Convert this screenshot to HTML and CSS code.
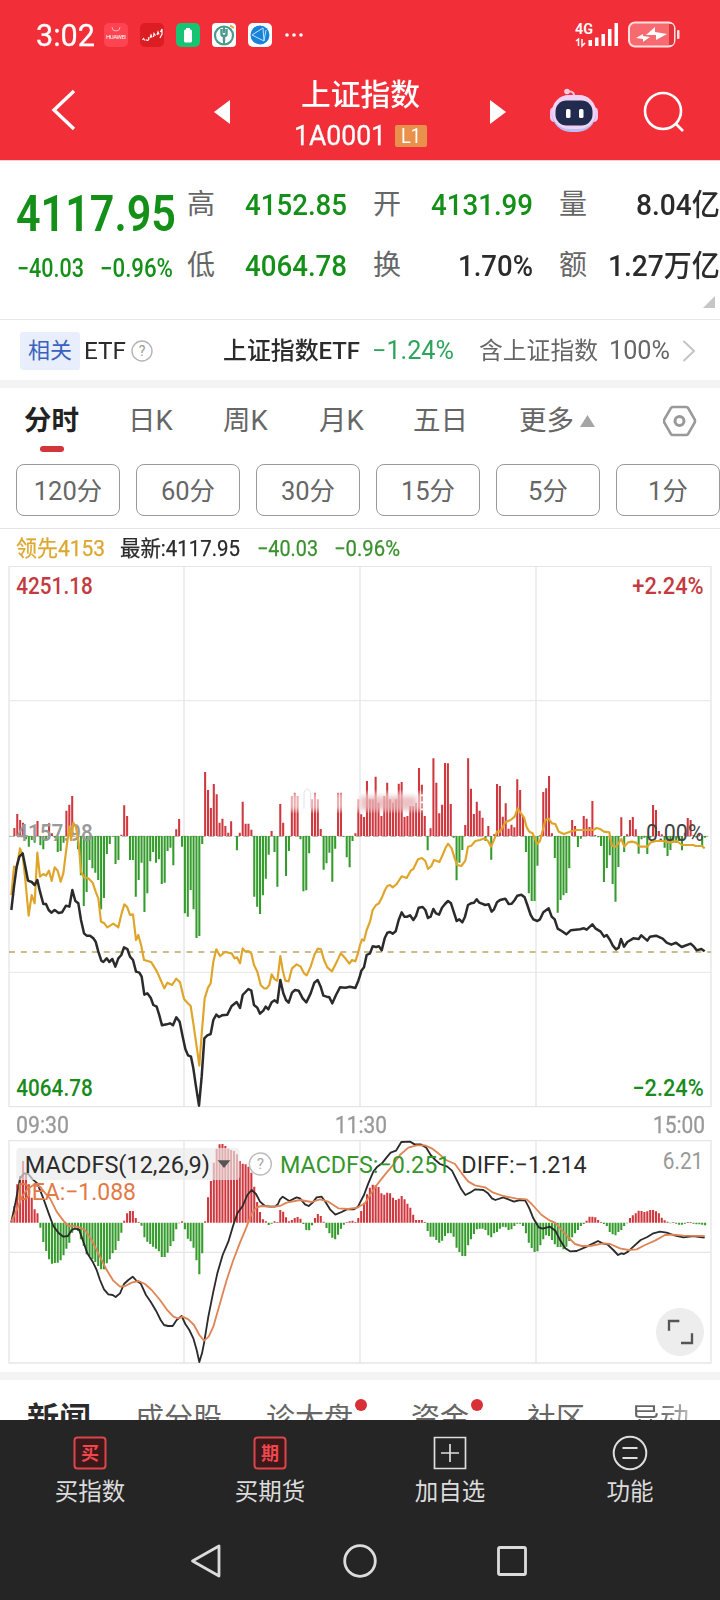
FILE: index.html
```html
<!DOCTYPE html>
<html lang="zh-CN">
<head>
<meta charset="utf-8">
<title>上证指数</title>
<link rel="stylesheet" href="styles.css">
</head>
<body>
<div class="phone">
  <div class="status">
    <span class="clock fit" data-w="59">3:02</span>
    <div class="apps">
      <svg width="24" height="24" viewBox="0 0 24 24"><rect width="24" height="24" rx="5" fill="#ff4350"/><path d="M8 4a4 4 0 0 0 8 0" fill="none" stroke="#ffb1b3" stroke-width="1"/><text x="2" y="16" font-size="6" fill="#fff" textLength="20">HUAWEI</text></svg>
      <svg width="24" height="24" viewBox="0 0 24 24"><rect width="24" height="24" rx="5" fill="#dc1d22"/><path d="M2.500 17l1-1.500 1.500 2M6 16.500a1.500 1.500 0 1 0 2-2M10 15l1-3 1 2.500M13.500 14l.5-3.500 1.500 2M17 12l1-3 1 2.500M20 15l2-4V6l-1.500 3" fill="none" stroke="#fff" stroke-width="1.200"/></svg>
      <svg width="24" height="24" viewBox="0 0 24 24"><rect width="24" height="24" rx="5" fill="#16c473"/><rect x="8" y="6.500" width="8" height="13" rx="1.500" fill="#fff"/><rect x="10" y="5" width="4" height="3" fill="#fff"/></svg>
      <svg width="24" height="24" viewBox="0 0 24 24"><rect width="24" height="24" rx="4" fill="#fff"/><circle cx="12" cy="12.500" r="9" fill="none" stroke="#4a9b8d" stroke-width="2.200"/><path d="M12 3v7M12 14v7" fill="none" stroke="#4a9b8d" stroke-width="2"/><path d="M9.500 6v5q0 2 2.500 2t2.500-2V6M12 12v6" fill="none" stroke="#4a9b8d" stroke-width="2.500"/><path d="M18 2.500l4 2.500" stroke="#e8a13c" stroke-width="2"/></svg>
      <svg width="24" height="24" viewBox="0 0 24 24"><rect width="24" height="24" rx="5" fill="#fff"/><circle cx="12" cy="12" r="9.500" fill="#1883d8"/><path d="M4 12l11-7 1 13L4 12m12 6l2-11" fill="none" stroke="#bfe4ff" stroke-width="1"/></svg>
      <svg class="dots" width="20" height="24" viewBox="0 0 20 24" fill="#fff"><circle cx="3" cy="12" r="1.800"/><circle cx="10" cy="12" r="1.800"/><circle cx="17" cy="12" r="1.800"/></svg>
    </div>
    <svg class="signal" width="108" height="28" viewBox="0 0 108 28">
      <g fill="#fff"><text x="0" y="13" font-size="15" font-weight="600" textLength="18" lengthAdjust="spacingAndGlyphs">4G</text>
      <path d="M13.500 19h3.500v6h-3.500zM20 16.500h3.500V25H20zM26.500 13H30v12h-3.500zM33 8h3.500v17H33zM39.500 2H43v23h-3.500z"/>
      <path d="M1 20l2.500-2v7M7 18v7l3-3" fill="none" stroke="#fff" stroke-width="1.500"/></g>
      <rect x="54" y="1.500" width="45.500" height="24" rx="6" fill="#f66a70" stroke="#ffdfe0" stroke-width="2"/>
      <path d="M94 3v21h2q3 0 3-4V7q0-4-3-4z" fill="#e0323b"/>
      <rect x="102" y="9" width="2.500" height="9" rx="1" fill="#ffe3e3"/>
      <path d="M71 14l9-8v5l12 2-11 6v-5zM61 17l7-4v2l7 1-7 5v-3z" fill="#fff"/>
    </svg>
  </div>
  <header class="header">
    <svg class="back" width="30" height="46" viewBox="0 0 30 46"><path d="M25 4L5 23l20 19" fill="none" stroke="#fff" stroke-width="3.400"/></svg>
    <svg class="prev" width="16" height="24" viewBox="0 0 16 24"><path d="M16 0v24L0 12z" fill="#fff"/></svg>
    <div class="title">
      <div class="name"><span class="fit" data-w="119">上证指数</span></div>
      <div class="code"><span class="fit" data-w="92">1A0001</span><b class="level"><span class="fit" data-w="20">L1</span></b></div>
    </div>
    <svg class="next" width="16" height="24" viewBox="0 0 16 24"><path d="M0 0v24l16-12z" fill="#fff"/></svg>
    <svg class="robot" width="50" height="46" viewBox="0 0 50 46">
      <path d="M18 4.500q8-1 7 6" fill="none" stroke="#f7bfd8" stroke-width="2"/><circle cx="18" cy="4.500" r="2.800" fill="#f9c9df"/>
      <rect x="1" y="20" width="9" height="15" rx="4.500" fill="#f3c6ee"/><rect x="40" y="20" width="9" height="15" rx="4.500" fill="#f3c6ee"/>
      <rect x="3" y="8" width="44" height="37" rx="18.500" fill="#b8bef6"/><rect x="3" y="8" width="44" height="34" rx="17" fill="#efd2f4"/>
      <rect x="6.500" y="13.500" width="37" height="25" rx="11" fill="#202b4e"/><rect x="17" y="22" width="4.500" height="9" rx="1.500" fill="#fff"/><rect x="30" y="22" width="4.500" height="9" rx="1.500" fill="#fff"/>
    </svg>
    <svg class="search" width="44" height="44" viewBox="0 0 44 44" fill="none" stroke="#fff" stroke-width="2.600"><circle cx="21" cy="21" r="18"/><path d="M33.500 33.500L41 41"/></svg>
  </header>

  <section class="quote">
    <div class="last">
      <div class="price"><span class="fit" data-w="160">4117.95</span></div>
      <div class="change"><span class="fit" data-w="67">−40.03</span><span class="fit" data-w="73">−0.96%</span></div>
    </div>
    <div class="stats">
      <label>高</label><span class="val green"><span class="fit" data-w="102">4152.85</span></span>
      <label>开</label><span class="val green"><span class="fit" data-w="102">4131.99</span></span>
      <label>量</label><span class="val"><span class="fit" data-w="84">8.04亿</span></span>
      <label>低</label><span class="val green"><span class="fit" data-w="102">4064.78</span></span>
      <label>换</label><span class="val"><span class="fit" data-w="75">1.70%</span></span>
      <label>额</label><span class="val"><span class="fit" data-w="112">1.27万亿</span></span>
    </div>
    <svg class="corner" width="12" height="12" viewBox="0 0 12 12"><path d="M12 0v12H0z" fill="#c6c6c6"/></svg>
  </section>

  <section class="etf">
    <span class="badge">相关</span><span class="etf-name"><span class="fit" data-w="42">ETF</span></span>
    <svg class="help" width="22" height="22" viewBox="0 0 22 22"><circle cx="11" cy="11" r="10" fill="none" stroke="#b4b4b4" stroke-width="1.400"/><text x="11" y="16" font-size="14" text-anchor="middle" fill="#999">?</text></svg>
    <span class="etf-fund"><span class="fit" data-w="137">上证指数ETF</span></span>
    <span class="etf-pct"><span class="fit" data-w="82">−1.24%</span></span>
    <span class="etf-inc"><span class="fit" data-w="119">含上证指数</span></span>
    <span class="etf-inc full"><span class="fit" data-w="61">100%</span></span>
    <svg class="more" width="14" height="22" viewBox="0 0 14 22"><path d="M1.500 1L12 11 1.500 21" fill="none" stroke="#c4c4c4" stroke-width="2"/></svg>
  </section>

  <nav class="periods">
    <span class="on">分时</span><span>日K</span><span>周K</span><span>月K</span><span>五日</span><span>更多</span>
    <svg class="caret" width="15" height="12" viewBox="0 0 15 12"><path d="M7.500 0L15 12H0z" fill="#a5a5a5"/></svg>
    <svg class="gear" width="34" height="32" viewBox="0 0 34 32" fill="none" stroke="#999"><path d="M10 2h13q1.500 0 2.300 1.300L31.500 14q1 2 0 4L25.300 28.700Q24.500 30 23 30H10q-1.500 0-2.300-1.300L1.500 18q-1-2 0-4L7.700 3.300Q8.500 2 10 2z" stroke-width="2.600"/><circle cx="16.500" cy="16" r="4.500" stroke-width="3"/></svg>
  </nav>
  <div class="minutes"><span>120分</span><span>60分</span><span>30分</span><span>15分</span><span>5分</span><span>1分</span></div>

  <div class="legend">
    <span class="lead"><span class="fit" data-w="89">领先4153</span></span>
    <span class="now"><span class="fit" data-w="120">最新:4117.95</span></span>
    <span class="chg"><span class="fit" data-w="61">−40.03</span></span>
    <span class="chg"><span class="fit" data-w="66">−0.96%</span></span>
  </div>

  <svg class="chart" width="720" height="542" viewBox="0 -522 2160 1626">
    <defs><filter id="soft"><feGaussianBlur stdDeviation="8"/></filter></defs>
    <g fill="none" stroke="#e6e6e6" stroke-width="4">
      <path d="M27-521H2133V1100H27zM552-521V1100M1080-521V1100M1608-521V1100"/>
      <path d="M27-118H2133M27 697H2133" stroke-width="3"/>
    </g>
    <path d="M27 289H2133" stroke="#aaa" stroke-width="3" stroke-dasharray="18 8"/>
    <g id="price-bars"></g>
    <g filter="url(#soft)">
      <rect x="860" y="158" width="410" height="54" fill="#fff" opacity=".6"/>
      <rect x="1080" y="168" width="170" height="42" fill="#d9868b" opacity=".5"/>
    </g>
    <path d="M912 205v-40q0-18 10-18t10 18v40" fill="none" stroke="#e2e2e2" stroke-width="3"/>
    <path d="M1262 166h20v42h-20M1262 187h20" fill="none" stroke="#fff" stroke-width="5"/>
    <path d="M27 636H2133" stroke="#b9a866" stroke-width="4" stroke-dasharray="18 17.500"/>
    <g font-size="69" font-weight="500">
      <text x="49" y="303" fill="#999" textLength="229" lengthAdjust="spacingAndGlyphs">4157.98</text>
      <text x="1938" y="304" fill="#444" font-weight="400" textLength="173" lengthAdjust="spacingAndGlyphs">0.00%</text>
    </g>
    <g id="price-lines"></g>
    <g font-size="69" font-weight="500">
      <text x="49" y="-437" fill="#c43a40" textLength="229" lengthAdjust="spacingAndGlyphs">4251.18</text>
      <text x="1897" y="-437" fill="#c43a40" textLength="214" lengthAdjust="spacingAndGlyphs">+2.24%</text>
      <text x="49" y="1068" fill="#198a1c" textLength="229" lengthAdjust="spacingAndGlyphs">4064.78</text>
      <text x="1897" y="1068" fill="#198a1c" textLength="214" lengthAdjust="spacingAndGlyphs">−2.24%</text>
    </g>
  </svg>

  <div class="times"><span class="fit" data-w="53">09:30</span><span class="fit" data-w="52">11:30</span><span class="fit" data-w="52">15:00</span></div>

  <div class="macd">
    <svg width="720" height="226" viewBox="0 117 2160 678">
      <path d="M27 122H2133V789H27zM552 122V789M1080 122V789M1608 122V789M27 457H2133" fill="none" stroke="#e6e6e6" stroke-width="4"/>
      <g id="macd-bars"></g>
      <g id="macd-lines"></g>
      <rect x="49" y="144" width="670" height="96" rx="12" fill="#e9e9e9" opacity=".66"/>
      <path d="M653 181h38l-19 23z" fill="#555"/>
      <circle cx="781" cy="192" r="33" fill="#fff" fill-opacity=".75" stroke="#bbb" stroke-width="4"/>
      <text x="781" y="208" font-size="46" text-anchor="middle" fill="#aaa">?</text>
      <g font-size="72">
        <text x="74" y="219" fill="#2b2b2b" textLength="556" lengthAdjust="spacingAndGlyphs">MACDFS(12,26,9)</text>
        <text x="840" y="219" fill="#35962b" textLength="511" lengthAdjust="spacingAndGlyphs">MACDFS:−0.251</text>
        <text x="1384" y="219" fill="#2b2b2b" textLength="376" lengthAdjust="spacingAndGlyphs">DIFF:−1.214</text>
        <text x="50" y="300" fill="#e27946" textLength="358" lengthAdjust="spacingAndGlyphs">DEA:−1.088</text>
        <text x="1988" y="208" fill="#999" textLength="122" lengthAdjust="spacingAndGlyphs">6.21</text>
      </g>
      <circle cx="2040" cy="696" r="72" fill="#ededed"/>
      <path d="M2007 692V663h31M2076 700v29h-33" fill="none" stroke="#555" stroke-width="7"/>
    </svg>
  </div>

  <nav class="feeds">
    <span class="on">新闻</span><span>成分股</span><span class="dot">诊大盘</span><span class="dot">资金</span><span>社区</span><span class="fade">异动</span>
  </nav>

  <footer class="actions">
    <div><svg width="34" height="34" viewBox="0 0 34 34"><rect x="1.500" y="1.500" width="31" height="31" rx="3" fill="#3a191b" stroke="#d9474b" stroke-width="2"/><text x="17" y="23.500" font-size="18" font-weight="700" text-anchor="middle" fill="#f0474d">买</text></svg><span>买指数</span></div>
    <div><svg width="34" height="34" viewBox="0 0 34 34"><rect x="1.500" y="1.500" width="31" height="31" rx="3" fill="#3a191b" stroke="#d9474b" stroke-width="2"/><text x="17" y="23.500" font-size="18" font-weight="700" text-anchor="middle" fill="#f0474d">期</text></svg><span>买期货</span></div>
    <div><svg width="34" height="34" viewBox="0 0 34 34" fill="none" stroke="#dedede" stroke-width="1.700"><path d="M1.500 1.500h31v31h-31zM8 17h18M17 8v18"/></svg><span>加自选</span></div>
    <div><svg width="36" height="36" viewBox="0 0 36 36" fill="none" stroke="#dedede" stroke-width="2"><circle cx="18" cy="18" r="16.300"/><path d="M10.500 13h15M10.500 23h15"/></svg><span>功能</span></div>
  </footer>
  <div class="system">
    <svg width="32" height="36" viewBox="0 0 32 36"><path d="M29 3v30L2.500 18z" fill="none" stroke="#dcdcdc" stroke-width="2.800" stroke-linejoin="round"/></svg>
    <svg width="36" height="36" viewBox="0 0 36 36"><circle cx="18" cy="18" r="15.300" fill="none" stroke="#dcdcdc" stroke-width="2.800"/></svg>
    <svg width="32" height="32" viewBox="0 0 32 32"><rect x="2.500" y="2.500" width="27" height="27" rx="1.500" fill="none" stroke="#dcdcdc" stroke-width="2.800"/></svg>
  </div>
</div>
<script src="chart.js"></script>
</body>
</html>
```
FILE: styles.css
```css
* { box-sizing: border-box; }
body { margin: 0; background: #fff; color: #2b2b2b; font-family: Roboto, "Noto Sans CJK SC", sans-serif; }
svg { display: block; flex: none; }
.phone { width: 720px; height: 1600px; display: flex; flex-direction: column; overflow: hidden; }
.phone > * { flex: none; }
.fit { display: inline-block; white-space: nowrap; transform-origin: 0 50%; }

.status { height: 66px; padding: 3px 37px 0 36px; background: #f22f38; color: #fff; display: flex; align-items: center; }
.clock { font-size: 32px; line-height: 36px; font-weight: 400; -webkit-text-stroke: 0.3px #fff; }
.apps { display: flex; gap: 12px; margin-left: 9px; }
.dots { margin-left: 0; }
.signal { margin-left: auto; }
.header { height: 94px; background: #f22f38; color: #fff; display: grid; grid-template-columns: 214px 16px 260px 16px 43px 50px 121px; align-items: center; }
.header > * { margin-top: -6px; }
.back { margin-left: 49px; }
.header .prev, .header .next { margin-top: -2px; }
.header .robot { margin-top: -7px; grid-column: 6; }
.header .search { margin: -3px 0 0 43px; }
.header .title { margin-top: 1px; text-align: center; }
.name { height: 41px; line-height: 48px; font-size: 30px; font-weight: 500; }
.code { height: 44px; display: flex; align-items: center; padding: 4px 0 0 64px; font-size: 28px; line-height: 30px; -webkit-text-stroke: 0.3px #fff; }
.level { width: 32px; height: 22px; margin-left: 9px; border-radius: 2px; background: #e9904c; font-size: 20px; line-height: 22px; font-weight: 400; -webkit-text-stroke: 0; }

.quote { height: 160px; border-bottom: 1px solid #e6e6e6; display: flex; position: relative; border-top: 1px solid #ffccd0; }
.last { width: 187px; padding: 22px 0 0 16px; color: #148f18; }
.price { font-size: 50px; line-height: 62px; font-weight: 600; height: 62px; }
.change { display: flex; gap: 16px; font-size: 25px; line-height: 30px; font-weight: 500; margin-top: 9px; padding-left: 1px; }
.stats { display: grid; grid-template-columns: 40px 120px 26px 40px 120px 26px 40px 121px; grid-template-rows: 61px 61px; padding-top: 13px; align-items: center; line-height: 36px; }
.stats label { font-size: 28px; color: #666; }
.stats label:nth-of-type(3n+2) { grid-column: 4; }
.stats label:nth-of-type(3n) { grid-column: 7; }
.val { font-size: 30px; font-weight: 500; text-align: right; white-space: nowrap; }
.green { color: #148f18; }
.corner { position: absolute; right: 5px; bottom: 11px; }

.etf { height: 60px; display: flex; align-items: center; padding-top: 1px; font-size: 24px; line-height: 32px; white-space: nowrap; }
.badge { width: 60px; height: 38px; margin-left: 20px; border-radius: 3px; background: #e8eefb; color: #3b61bf; font-size: 22px; line-height: 38px; text-align: center; }
.etf-name { margin-left: 4px; width: 47px; }
.etf-fund { margin-left: 70px; font-weight: 500; width: 149px; }
.etf-pct { color: #2ea35c; width: 107px; font-size: 25px; }
.etf-inc { color: #666; width: 130px; }
.etf-inc.full { width: 73px; font-size: 25px; }

.periods { height: 84px; border-top: 8px solid #f4f4f4; padding: 0 0 11px 24px; display: grid; grid-template-columns: 104px 95px 96px 94px 106px 61px 83px 34px; align-items: center; font-size: 27.5px; line-height: 38px; color: #666; }
.periods .on { color: #222; font-weight: 700; position: relative; }
.periods .on::after { content: ""; position: absolute; left: 16px; top: 44px; width: 24px; height: 6px; border-radius: 3px; background: #d2363b; }
.minutes { height: 65px; border-bottom: 1px solid #e4e4e4; display: flex; gap: 16px; padding-left: 16px; }
.minutes span { flex: none; width: 104px; height: 52px; border: 1px solid #999; border-radius: 8px; text-align: center; font-size: 25.5px; line-height: 52px; color: #666; }
.legend { height: 37px; padding: 2px 0 0 16px; display: flex; align-items: center; font-size: 21.5px; line-height: 28px; }
.legend > span { white-space: nowrap; }
.lead { width: 104px; color: #dca72f; }
.now { width: 137px; }
.chg { width: 77px; color: #3a912e; }
.legend > span { -webkit-text-stroke: 0.25px currentColor; }
.chart text, .macd text { font-family: Roboto, sans-serif; }
.times { height: 31px; padding: 3px 15px 0 16px; display: flex; align-items: center; justify-content: space-between; font-size: 23px; color: #999; -webkit-text-stroke: 0.3px #999; }
.macd { height: 233px; }

.feeds { height: 48px; border-top: 8px solid #f4f4f4; overflow: hidden; display: grid; grid-template-columns: 108px 131px 145px 116px 104px 90px; padding: 17px 0 0 27px; line-height: 44px; font-size: 29px; color: #666; }
.feeds .on { font-size: 32px; font-weight: 700; color: #2b2b2b; }
.feeds .dot { position: relative; justify-self: start; }
.feeds .dot::after { content: ""; position: absolute; right: -14px; top: 2px; width: 12px; height: 12px; border-radius: 50%; background: #d92f36; }
.feeds .fade { background: linear-gradient(90deg, #666 50%, #bbb 100%); -webkit-background-clip: text; background-clip: text; color: transparent; justify-self: start; }
.actions { height: 102px; background: #252525; color: #dcdcdc; display: grid; grid-template-columns: repeat(4, 180px); }
.actions div { display: grid; grid-template-rows: 36px 36px; justify-items: center; align-items: center; padding-top: 15px; align-content: start; row-gap: 3px; font-size: 23.5px; line-height: 34px; }
.system { height: 78px; background: #252525; display: flex; align-items: center; gap: 120px; padding-left: 190px; }
.system svg:last-child { margin-left: -2px; }
```
FILE: chart.js
```js
// Squeeze each label to its column width.
document.querySelectorAll('.fit').forEach(el => {
  const w = +el.dataset.w, own = el.getBoundingClientRect().width;
  el.style.transform = `scaleX(${w / own})`;
  el.style.marginRight = `${w - own}px`;
});

const NS = 'http://www.w3.org/2000/svg';
function path(parent, d, attrs) {
  const p = document.createElementNS(NS, 'path');
  p.setAttribute('d', d);
  for (const k in attrs) p.setAttribute(k, attrs[k]);
  document.getElementById(parent).appendChild(p);
}

// One bar per trading minute, above or below the base line.
function bars(parent, base, values) {
  let up = '', down = '';
  values.forEach((v, i) => {
    const d = `M${(34.500 + 8.670 * i).toFixed(1)} ${base}v${-v}`;
    if (v > 0) up += d; else if (v < 0) down += d;
  });
  path(parent, up, { stroke: '#d0383f', 'stroke-width': 6.2 });
  path(parent, down, { stroke: '#359b2d', 'stroke-width': 6.2 });
}

// Morning and afternoon sessions; the afternoon starts at x = 1080.
function line(parent, color, width, am, pm) {
  const a = am.trim().split(/\s+/);
  const b = pm.trim().split(/\s+/).map(p => {
    const [x, y] = p.split(',');
    return `${+x + 1080},${y}`;
  });
  path(parent, 'M' + a.concat(b).join('L'), { fill: 'none', stroke: color, 'stroke-width': width, 'stroke-linejoin': 'round' });
}

bars('price-bars', 288, [
  0,24,66,48,40,-10,-32,-12,-20,45,-28,-40,-10,38,8,-5,-48,-45,-20,76,94,120,0,-40,-118,-210,-168,-72,-97,-110,
  -132,-220,-186,-54,-24,-2,-84,-72,4,92,60,-72,-72,-182,-132,-80,-228,-172,-76,-48,-80,-70,-144,-140,-45,-35,-88,20,51,-32,
  -232,-242,-162,-220,-306,-300,-24,192,138,84,156,125,40,52,30,10,44,0,-43,10,103,37,37,19,-182,-212,-234,-178,-128,-56,
  15,-48,-152,96,40,-120,-45,120,130,120,-10,-166,-163,-52,110,130,110,21,-101,-82,-50,-137,-38,130,130,-2,-64,-94,-15,8,
  110,65,57,165,110,110,178,100,60,120,160,110,100,110,157,162,57,60,90,90,100,204,154,60,-43,23,233,160,68,94,
  219,218,96,-5,-133,-80,-42,33,233,142,66,103,76,55,-15,30,-71,5,156,150,58,98,22,34,26,170,138,60,-48,-172,
  -195,-195,-89,3,132,143,180,8,-66,-230,-192,-178,-171,-97,48,30,-33,-8,60,52,27,105,3,-4,-30,-138,-96,-58,-144,-197,
  -93,56,-48,5,48,57,20,-53,-10,-5,-54,-5,93,78,15,5,-35,-60,-42,-20,-20,-15,-43,10,54,48,3,-5,10,-30,-5
]);

line('price-lines', '#dfa52a', 6.5,
  `34,465 42,380 50,385 56,350 60,325 68,345 76,420 86,527 95,465 104,490 112,338 120,410 130,402 138,407 147,392 155,423 164,382 173,392 182,425 190,400 200,320 208,260 213,300 220,248 228,262 236,310 243,395 252,412 265,415 278,428 287,455 295,475 303,545 313,550 322,562 340,551 355,562 365,520 373,493 382,502 390,525 399,523 408,600 415,585 424,618 432,660 446,664 454,667 462,680 472,697 482,720 493,745 502,728 516,735 529,716 540,727 552,777 562,788 572,798 580,850 590,920 598,977 606,870 614,775 624,743 632,730 640,665 649,628 660,648 675,636 695,640 704,655 711,652 720,670 728,625 736,635 745,633 754,640 762,675 772,695 782,735 792,745 800,745 808,735 815,703 824,718 832,722 841,648 848,690 856,722 866,724 876,685 890,673 902,680 912,700 920,706 932,680 943,645 953,626 963,628 972,660 982,682 996,694 1008,670 1022,640 1036,655 1048,671 1056,660 1066,664 1074,640`,
  `0,615 6,598 12,602 20,570 30,545 38,510 48,495 57,490 66,472 75,450 82,438 90,435 98,442 110,432 125,409 140,414 152,392 160,387 174,358 186,354 196,363 204,387 214,378 222,360 238,366 248,345 256,325 264,311 275,325 284,355 292,375 304,378 316,362 324,320 334,317 346,303 360,300 374,295 384,303 393,320 402,300 411,275 420,275 428,262 436,247 452,240 464,230 473,205 484,222 492,232 500,262 508,275 518,280 524,295 532,312 540,303 547,275 556,240 566,236 576,250 586,252 596,275 612,282 630,275 650,270 700,270 710,264 722,268 732,275 748,277 756,318 768,320 784,297 793,320 804,307 816,305 828,308 840,320 862,320 872,307 888,303 910,303 930,308 950,303 966,315 1000,315 1006,318 1026,318 1034,325`);
line('price-lines', '#2b2b2b', 7.5,
  `34,510 42,440 50,380 58,350 68,340 76,380 84,422 95,426 104,435 112,420 120,455 130,492 138,492 146,510 154,518 164,510 176,519 186,517 198,497 208,500 217,450 226,483 235,490 243,540 252,580 260,587 270,587 280,595 287,605 295,635 304,662 310,666 320,655 328,666 337,657 346,680 355,655 364,645 372,622 382,627 390,650 399,660 408,695 418,698 425,710 433,764 442,760 452,773 460,795 470,800 478,826 486,856 500,853 510,850 519,856 529,832 539,845 547,885 556,927 564,946 573,950 580,985 588,1040 597,1097 605,1010 613,895 622,886 632,882 640,840 649,824 657,831 666,826 682,824 695,798 710,786 720,804 728,765 745,747 754,752 762,795 772,803 780,821 790,812 797,800 805,808 815,787 824,781 832,788 841,720 850,760 858,780 866,788 876,758 885,750 896,752 908,775 919,787 932,760 943,728 953,720 962,740 970,767 980,770 988,772 997,790 1008,765 1020,742 1036,743 1050,740 1066,744 1075,722`,
  `0,707 4,692 12,682 20,645 30,640 38,619 48,621 57,619 65,631 74,595 82,578 90,576 98,581 107,574 116,540 125,517 133,530 142,530 150,526 160,540 168,528 176,503 188,501 196,510 204,534 212,530 220,507 228,520 237,524 246,503 255,492 264,483 273,490 281,515 290,543 298,538 307,547 315,530 324,495 333,490 342,488 350,478 358,488 376,495 386,493 395,515 402,508 411,487 420,480 436,476 446,492 455,491 464,480 472,467 484,464 494,472 502,495 512,525 520,538 532,543 540,538 550,517 566,505 575,530 584,538 593,566 605,573 619,583 632,571 660,568 672,565 680,569 697,553 706,565 722,575 732,590 740,585 750,600 758,616 768,628 776,623 783,597 792,620 802,606 820,595 836,597 844,586 862,602 870,590 888,587 908,596 920,608 934,614 948,608 965,621 992,611 1002,620 1010,631 1024,627 1034,634`);

bars('macd-bars', 368, [
  5,50,115,140,185,150,115,75,40,28,-15,-58,-85,-110,-123,-121,-120,-113,-98,-78,-60,-30,-15,-25,-50,-70,-95,-100,-110,-118,
  -130,-140,-140,-122,-110,-92,-82,-55,-30,6,28,35,35,14,2,-9,-44,-57,-64,-72,-78,-86,-103,-103,-90,-70,-56,-20,-2,4,
  -20,-48,-56,-75,-113,-155,-92,4,76,125,180,222,235,236,230,222,218,215,205,185,177,175,168,150,108,62,32,10,4,-7,
  -3,4,2,38,33,16,4,8,14,17,12,-4,-22,-23,-8,14,26,20,3,-16,-32,-45,-50,-36,-18,-6,2,4,6,2,
  14,35,60,85,105,114,112,107,88,84,90,88,75,68,72,80,70,57,45,24,8,8,8,2,-25,-42,-42,-52,-60,-54,
  -40,-32,-32,-42,-75,-88,-100,-100,-68,-50,-34,-20,-18,-18,-22,-38,-44,-32,-28,-18,-12,-14,-22,-20,-10,-3,-3,-10,-32,-60,
  -76,-88,-86,-68,-50,-38,-40,-52,-65,-73,-73,-80,-72,-55,-44,-32,-22,-10,-4,6,18,18,16,8,2,-4,-10,-28,-35,-38,
  -28,-22,-10,-2,14,22,28,36,35,32,34,38,38,34,28,15,7,3,-2,2,-3,-6,-6,-3,2,2,-3,-5,-5,-6,-8
]);

line('macd-lines', '#2b2b2b', 5.5,
  `34,365 46,310 60,235 72,220 85,222 98,238 112,250 130,295 146,340 160,378 175,398 190,410 204,408 215,390 224,386 237,388 250,425 262,460 278,485 290,510 300,540 312,568 325,583 338,585 347,591 360,580 372,552 385,540 398,530 410,543 422,550 438,585 452,605 468,632 482,660 492,675 504,678 518,678 530,660 545,648 556,672 568,690 580,715 590,750 598,786 606,760 612,730 625,650 640,575 652,520 668,465 685,425 700,375 712,340 728,318 742,285 755,270 768,282 780,305 795,318 810,320 825,320 834,312 840,298 848,290 860,298 868,303 890,292 900,295 915,313 926,318 938,308 950,292 965,290 978,308 990,328 1006,344 1025,336 1040,328 1062,328 1074,320`,
  `0,308 12,285 25,250 40,215 52,200 66,190 80,172 92,158 108,152 124,126 150,125 164,133 182,133 198,142 212,165 226,180 240,192 262,200 276,212 290,240 304,268 316,285 330,278 346,268 370,270 384,280 396,295 406,300 430,292 462,305 480,300 496,302 508,325 520,355 536,382 548,386 570,380 586,392 600,420 616,445 630,454 650,453 680,440 700,430 714,423 728,430 742,433 760,450 774,465 784,460 792,462 804,455 820,440 842,420 862,411 880,400 900,395 920,398 940,405 970,412 1000,408 1020,411 1034,413`);
line('macd-lines', '#e08455', 5.5,
  `34,365 48,335 66,290 82,268 100,255 120,260 136,280 150,295 170,335 190,362 205,378 220,378 238,382 255,390 275,420 295,460 320,510 340,542 360,560 376,558 395,548 416,543 435,552 455,570 480,600 500,628 520,650 534,655 548,650 565,658 582,675 598,705 612,722 626,710 640,680 660,610 680,540 700,480 720,428 740,380 755,340 770,322 785,318 820,320 840,318 860,308 900,300 935,306 960,298 985,305 1015,325 1045,327 1072,323`,
  `0,318 15,310 30,285 48,258 70,230 95,200 120,165 145,143 170,136 195,136 215,145 235,160 258,180 285,192 305,220 325,245 345,256 375,262 400,278 430,288 470,296 500,298 515,312 545,345 570,362 585,368 605,390 625,412 645,432 665,438 690,438 730,430 750,432 780,445 805,450 830,448 855,435 885,422 915,405 940,404 970,407 1034,408`);
```
